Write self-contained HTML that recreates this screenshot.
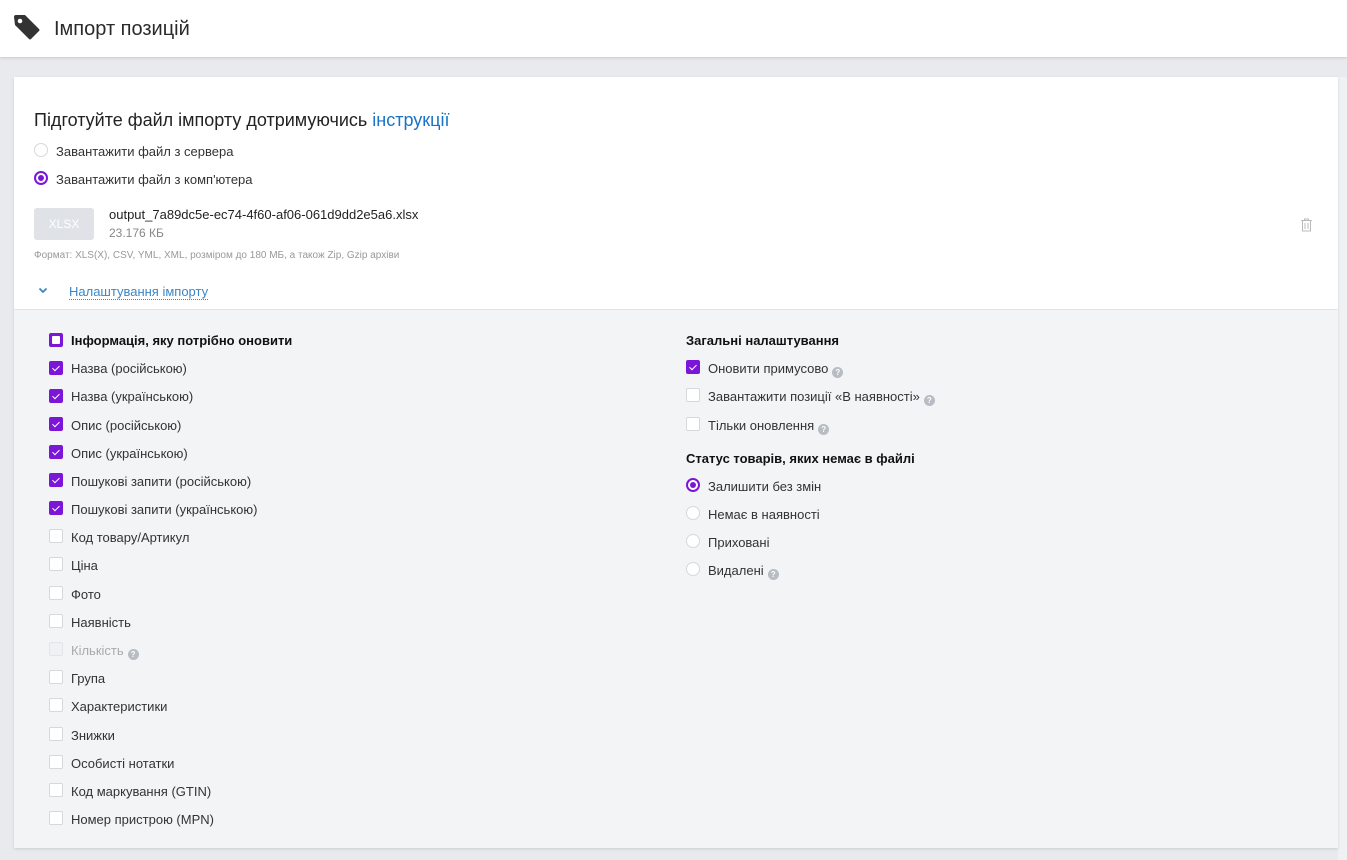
<!DOCTYPE html>
<html><head><meta charset="utf-8"><style>
*{box-sizing:border-box;margin:0;padding:0}
body{width:1347px;height:860px;overflow:hidden;background:#e9eaed;font-family:"Liberation Sans","DejaVu Sans",sans-serif;color:#222;position:relative}
.hdr{position:absolute;left:0;top:0;width:1347px;height:57px;background:#fff;box-shadow:0 1px 3px rgba(0,0,0,.15)}
.hdr h1{position:absolute;left:54px;top:18px;font-size:20px;font-weight:normal;color:#2a2a2a}
.card{position:absolute;left:14px;top:77px;width:1324px;height:771px;background:#f3f4f6;box-shadow:0 1px 3px rgba(0,0,0,.12)}
.top{position:absolute;left:0;top:0;width:1324px;height:233px;background:#fff;border-bottom:1px solid #e3e4e7}
.rstrip{position:absolute;left:1338px;top:77px;width:9px;height:783px;background:#f0f1f3}
.a{position:absolute;white-space:nowrap}
.t13{font-size:13px;color:#333}
.cb{position:absolute;width:14px;height:14px;border:1px solid #d6d8dc;background:#fff;border-radius:2px}
.cb.on{background:#7b16d9;border-color:#7b16d9}
.cb.on::after{content:"";position:absolute;left:4px;top:1.5px;width:3px;height:6px;border:solid #fff;border-width:0 1.5px 1.5px 0;transform:rotate(45deg)}
.rd{position:absolute;width:14px;height:14px;border:1px solid #d6d8dc;background:#fff;border-radius:50%}
.rd.on{border:2px solid #7b16d9}
.rd.on::after{content:"";position:absolute;left:2px;top:2px;width:6px;height:6px;border-radius:50%;background:#7b16d9}
.q{display:inline-block;width:11px;height:11px;border-radius:50%;background:#b8bcc3;color:#fff;font-size:8px;text-align:center;line-height:11px;font-weight:bold;vertical-align:-2px;margin-left:4px}
</style></head><body>
<div class="hdr">
<svg style="position:absolute;left:12px;top:12px" width="30" height="30" viewBox="12 12 30 30"><path d="M14 17 Q14 15 16 15 L25 15 L39 29 Q40 30 39 31 L31 39 Q30 40 29 39 L15 25 Z" fill="#333"/><circle cx="20" cy="21" r="2.3" fill="#fff"/></svg>
<h1>Імпорт позицій</h1>
</div>
<div class="rstrip"></div>
<div class="card">
<div class="top">
<div class="a" style="left:20px;top:33px;font-size:18px;color:#222">Підготуйте файл імпорту дотримуючись <span style="color:#1a73c8">інструкції</span></div>
<div class="rd" style="left:20px;top:66px"></div><div class="a t13" style="left:42px;top:67px">Завантажити файл з сервера</div>
<div class="rd on" style="left:20px;top:94px"></div><div class="a t13" style="left:42px;top:95px">Завантажити файл з комп'ютера</div>
<div class="a" style="left:20px;top:131px;width:60px;height:32px;background:#dfe2e6;border-radius:3px;color:#fff;font-size:12px;text-align:center;line-height:32px">XLSX</div>
<div class="a t13" style="left:95px;top:130px;color:#222">output_7a89dc5e-ec74-4f60-af06-061d9dd2e5a6.xlsx</div>
<div class="a" style="left:95px;top:149px;font-size:12px;color:#888">23.176 КБ</div>
<div class="a" style="left:20px;top:173px;font-size:10px;color:#999">Формат: XLS(X), CSV, YML, XML, розміром до 180 МБ, а також Zip, Gzip архіви</div>
<svg class="a" style="left:1286px;top:141px" width="13" height="14" viewBox="0 0 13 14"><path d="M1 2.5H12M4.5 2.5V1H8.5V2.5M2.5 2.5V13H10.5V2.5M5 5V11M8 5V11" stroke="#bbb" fill="none" stroke-width="1"/></svg>
<svg class="a" style="left:24px;top:210px" width="10" height="7" viewBox="0 0 10 7"><path d="M1.5 1.5L5 5L8.5 1.5" stroke="#3a86c6" stroke-width="1.8" fill="none"/></svg>
<div class="a t13" style="left:55px;top:207px;color:#3a86c6;border-bottom:1px dotted #3a86c6;line-height:15px">Налаштування імпорту</div>
</div>
</div>
<div class="cb on" style="left:49px;top:333px"></div>
<div style="position:absolute;left:52px;top:336px;width:8px;height:8px;background:#fff;border-radius:1px"></div>
<div class="a t13" style="left:71px;top:333px;font-weight:bold;color:#111">Інформація, яку потрібно оновити</div>
<div class="cb on" style="left:49px;top:361px"></div><div class="a t13" style="left:71px;top:361px">Назва (російською)</div>
<div class="cb on" style="left:49px;top:389px"></div><div class="a t13" style="left:71px;top:389px">Назва (українською)</div>
<div class="cb on" style="left:49px;top:417px"></div><div class="a t13" style="left:71px;top:418px">Опис (російською)</div>
<div class="cb on" style="left:49px;top:445px"></div><div class="a t13" style="left:71px;top:446px">Опис (українською)</div>
<div class="cb on" style="left:49px;top:473px"></div><div class="a t13" style="left:71px;top:474px">Пошукові запити (російською)</div>
<div class="cb on" style="left:49px;top:501px"></div><div class="a t13" style="left:71px;top:502px">Пошукові запити (українською)</div>
<div class="cb" style="left:49px;top:529px"></div><div class="a t13" style="left:71px;top:530px">Код товару/Артикул</div>
<div class="cb" style="left:49px;top:557px"></div><div class="a t13" style="left:71px;top:558px">Ціна</div>
<div class="cb" style="left:49px;top:586px"></div><div class="a t13" style="left:71px;top:587px">Фото</div>
<div class="cb" style="left:49px;top:614px"></div><div class="a t13" style="left:71px;top:615px">Наявність</div>
<div class="cb" style="left:49px;top:642px;background:#f0f1f3;border-color:#e3e4e7"></div><div class="a t13" style="left:71px;top:643px;color:#aaa">Кількість<span class="q">?</span></div>
<div class="cb" style="left:49px;top:670px"></div><div class="a t13" style="left:71px;top:671px">Група</div>
<div class="cb" style="left:49px;top:698px"></div><div class="a t13" style="left:71px;top:699px">Характеристики</div>
<div class="cb" style="left:49px;top:727px"></div><div class="a t13" style="left:71px;top:728px">Знижки</div>
<div class="cb" style="left:49px;top:755px"></div><div class="a t13" style="left:71px;top:756px">Особисті нотатки</div>
<div class="cb" style="left:49px;top:783px"></div><div class="a t13" style="left:71px;top:784px">Код маркування (GTIN)</div>
<div class="cb" style="left:49px;top:811px"></div><div class="a t13" style="left:71px;top:812px">Номер пристрою (MPN)</div>

<div class="a t13" style="left:686px;top:333px;font-weight:bold;color:#111">Загальні налаштування</div>
<div class="cb on" style="left:686px;top:360px"></div><div class="a t13" style="left:708px;top:361px">Оновити примусово<span class="q">?</span></div>
<div class="cb" style="left:686px;top:388px"></div><div class="a t13" style="left:708px;top:389px">Завантажити позиції «В наявності»<span class="q">?</span></div>
<div class="cb" style="left:686px;top:417px"></div><div class="a t13" style="left:708px;top:418px">Тільки оновлення<span class="q">?</span></div>
<div class="a t13" style="left:686px;top:451px;font-weight:bold;color:#111">Статус товарів, яких немає в файлі</div>
<div class="rd on" style="left:686px;top:478px"></div><div class="a t13" style="left:708px;top:479px">Залишити без змін</div>
<div class="rd" style="left:686px;top:506px"></div><div class="a t13" style="left:708px;top:507px">Немає в наявності</div>
<div class="rd" style="left:686px;top:534px"></div><div class="a t13" style="left:708px;top:535px">Приховані</div>
<div class="rd" style="left:686px;top:562px"></div><div class="a t13" style="left:708px;top:563px">Видалені<span class="q">?</span></div>
</body></html>
